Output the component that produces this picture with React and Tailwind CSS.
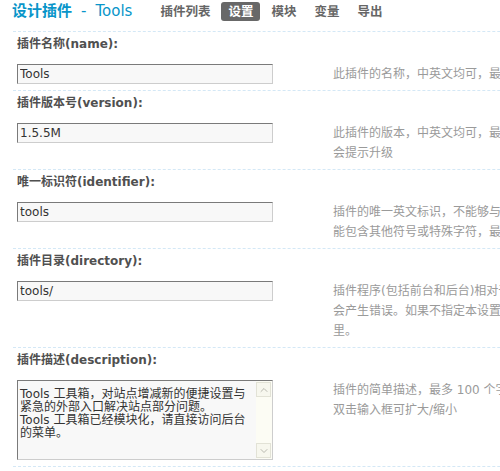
import { ChevronUp, ChevronDown } from "lucide-react";

const FONT = "font-['DejaVu_Sans','Noto_Sans_CJK_SC',sans-serif]";

const TABS = [
  { label: "插件列表" },
  { label: "设置", active: true },
  { label: "模块" },
  { label: "变量" },
  { label: "导出" },
];

const FIELDS = [
  {
    label: "插件名称(name):",
    value: "Tools",
    help: ["此插件的名称，中英文均可，最多 40 个字节"],
  },
  {
    label: "插件版本号(version):",
    value: "1.5.5M",
    help: ["此插件的版本，中英文均可，最多 20 个字节，升级时", "会提示升级"],
  },
  {
    label: "唯一标识符(identifier):",
    value: "tools",
    help: ["插件的唯一英文标识，不能够与其他插件标识重复，只", "能包含其他符号或特殊字符，最多 40 个字节"],
  },
  {
    label: "插件目录(directory):",
    value: "tools/",
    help: ["插件程序(包括前台和后台)相对于插件目录的路径，否则", "会产生错误。如果不指定本设置，插件将放在插件目录", "里。"],
  },
];

const DESCRIPTION = [
  "Tools 工具箱，对站点增减新的便捷设置与",
  "紧急的外部入口解决站点部分问题。",
  "Tools 工具箱已经模块化，请直接访问后台",
  "的菜单。",
];

function Help({ lines }) {
  return (
    <div className="ml-[60px] text-[12px] leading-[20px] text-[#9a9a9a] whitespace-nowrap">
      {lines.map((l, i) => (
        <div key={i}>{l}</div>
      ))}
    </div>
  );
}

function Section({ label, children }) {
  return (
    <div className="border-b border-dashed border-[#d4e8f6] pl-[4px] pt-[2px] pb-[6px]">
      <div className="h-[20px] leading-[20px] text-[12px] font-bold text-[#505050]">{label}</div>
      <div className="mt-[10px] flex items-start">{children}</div>
    </div>
  );
}

const BOX = "w-[256px] shrink-0 border border-t-[#7a7a7a] border-l-[#7a7a7a] border-b-[#cdcdcd] border-r-[#cdcdcd] bg-[#f8f8f8] text-[12px] text-[#333]";

function ScrollButton({ children }) {
  return (
    <div className="h-[15px] w-[15px] flex items-center justify-center border border-[#e2e2d6] bg-[#f7f7ee] text-[#b9b9b0]">
      {children}
    </div>
  );
}

export default function App() {
  return (
    <div className={`w-[500px] h-[471px] overflow-hidden bg-white ${FONT}`}>
      <div className="ml-[13px] mr-[-200px]">
        {/* title + tabs */}
        <div className="h-[32px] flex items-start pt-[2px] border-b border-dashed border-[#d4e8f6]">
          <div className="ml-[-1px] h-[19px] leading-[19px] text-[15px] text-[#0895c9] whitespace-nowrap">
            <span className="font-bold">设计插件</span>
            <span className="ml-[9px]">-</span>
            <span className="ml-[9px]">Tools</span>
          </div>
          <div className="ml-[21px] flex gap-[4px]">
            {TABS.map(t => (
              <span
                key={t.label}
                className={
                  "h-[19px] leading-[19px] px-[7px] rounded-[3px] text-[12.5px] font-bold whitespace-nowrap " +
                  (t.active ? "bg-[#686868] text-white" : "text-[#666]")
                }
              >
                {t.label}
              </span>
            ))}
          </div>
        </div>

        {FIELDS.map(f => (
          <Section key={f.label} label={f.label}>
            <input readOnly value={f.value} className={`${BOX} h-[20px] px-[2px] outline-none`} />
            <Help lines={f.help} />
          </Section>
        ))}

        <Section label="插件描述(description):">
          <div className={`${BOX} h-[80px] flex`}>
            <div className="flex-1 pl-[2px] pt-[7px] leading-[13px] whitespace-nowrap overflow-hidden">
              {DESCRIPTION.map((l, i) => (
                <div key={i}>{l}</div>
              ))}
            </div>
            <div className="w-[16px] bg-[#fcfcf4] flex flex-col justify-between py-[1px]">
              <ScrollButton>
                <ChevronUp size={12} strokeWidth={2} />
              </ScrollButton>
              <ScrollButton>
                <ChevronDown size={12} strokeWidth={2} />
              </ScrollButton>
            </div>
          </div>
          <Help lines={["插件的简单描述，最多 100 个字节，支持 HTML", "双击输入框可扩大/缩小"]} />
        </Section>
      </div>
    </div>
  );
}
